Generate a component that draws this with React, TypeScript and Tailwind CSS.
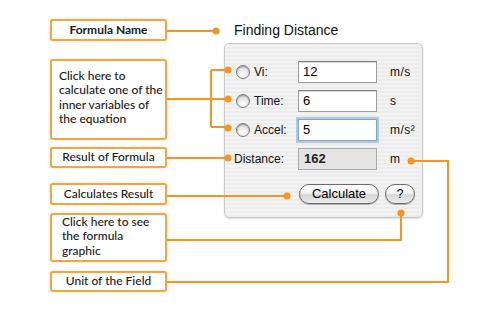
import React from 'react';

const orange = '#f7941e';

const Callout = ({ children, className }: { children: React.ReactNode; className: string }) => (
  <div
    className={`w-[117px] border-2 border-[#f8a43c] rounded-[3px] bg-white shadow-[0_0_3px_rgba(247,148,30,0.25)] text-[12px] leading-[14.4px] text-[#1a1a1a] font-['Lato',sans-serif] ${className}`}
  >
    {children}
  </div>
);

const Radio = () => (
  <div className="w-[14px] h-[14px] rounded-full border border-[#7a7a7a] bg-[radial-gradient(circle_at_50%_70%,#ffffff_0%,#e4e4e4_55%,#b9b9b9_100%)] shadow-[inset_0_1px_1px_rgba(0,0,0,0.25)]" />
);

const Field = ({ value, focus }: { value: string; focus?: boolean }) => (
  <div
    className={`w-[79px] h-[22px] bg-white flex items-center pl-[4px] text-[13px] text-black border ${
      focus
        ? 'border-[#7ea6cf] shadow-[0_0_0_2px_rgba(126,166,207,0.55)]'
        : 'border-[#9d9d9d] border-t-[#7b7b7b] shadow-[inset_0_1px_1px_rgba(0,0,0,0.15)]'
    }`}
  >
    {value}
  </div>
);

const Connectors = () => (
  <svg className="absolute inset-0 pointer-events-none" width="501" height="336" viewBox="0 0 501 336">
    <g stroke={orange} strokeWidth="2" fill="none">
      <path d="M167 31 H216" />
      <path d="M167 99 H228 M211 70 V127 M211 70 H228 M211 127 H228" />
      <path d="M167 158 H228" />
      <path d="M167 196 H287" />
      <path d="M401 213 V240 H167" />
      <path d="M411 161 H448 V282 H167" />
    </g>
    <g fill={orange}>
      <circle cx="216" cy="31" r="3.5" />
      <circle cx="228" cy="70" r="3.5" />
      <circle cx="228" cy="99" r="3.5" />
      <circle cx="228" cy="128" r="3.5" />
      <circle cx="228" cy="158" r="3.5" />
      <circle cx="287" cy="196" r="3.5" />
      <circle cx="401" cy="213" r="3.5" />
      <circle cx="411" cy="161" r="3.5" />
    </g>
  </svg>
);

const App = () => {
  const rows = [
    { label: 'Vi:', value: '12', unit: 'm/s' },
    { label: 'Time:', value: '6', unit: 's' },
    { label: 'Accel:', value: '5', unit: 'm/s²', focus: true },
  ];

  return (
    <div className="relative w-[501px] h-[336px] bg-white flex overflow-hidden">
      {/* Callouts */}
      <div className="ml-[50px] pt-[19px] flex flex-col">
        <Callout className="h-[22px] flex items-center justify-center font-bold">Formula Name</Callout>
        <Callout className="h-[81px] mt-[18px] pl-[7px] pt-[8px] font-medium">
          Click here to
          <br />
          calculate one of the
          <br />
          inner variables of
          <br />
          the equation
        </Callout>
        <Callout className="h-[21px] mt-[7px] flex items-center justify-center font-medium">Result of Formula</Callout>
        <Callout className="h-[22px] mt-[15px] flex items-center justify-center font-medium">Calculates Result</Callout>
        <Callout className="h-[49px] mt-[8px] pl-[10px] pt-0 font-medium">
          Click here to see
          <br />
          the formula
          <br />
          graphic
        </Callout>
        <Callout className="h-[21px] mt-[9px] flex items-center justify-center font-medium">Unit of the Field</Callout>
      </div>

      {/* Calculator */}
      <div className="ml-[57px] w-[199px] flex flex-col font-['Liberation_Sans',sans-serif]">
        <div className="mt-[20px] h-[20px] leading-[20px] pl-[10px] text-[14px] text-[#111]">Finding Distance</div>
        <div className="mt-[3px] h-[175px] rounded-[5px] border border-[#c9c9c9] bg-[repeating-linear-gradient(0deg,#ececec_0px,#ececec_2px,#f3f3f3_2px,#f3f3f3_4px)] shadow-[0_1px_2px_rgba(0,0,0,0.15)] pt-[17px] flex flex-col gap-[7px] text-[12px] text-[#111]">
          {rows.map((r) => (
            <div key={r.label} className="h-[22px] flex items-center pl-[11px]">
              <Radio />
              <div className="w-[44px] ml-[4px]">{r.label}</div>
              <Field value={r.value} focus={r.focus} />
              <div className="ml-[13px] tracking-[0.5px]">{r.unit}</div>
            </div>
          ))}
          <div className="h-[22px] flex items-center pl-[9px]">
            <div className="w-[64px]">Distance:</div>
            <div className="w-[79px] h-[22px] bg-[#e4e4e4] border border-[#a9a9a9] flex items-center pl-[5px] text-[13px] font-bold text-[#222]">
              162
            </div>
            <div className="ml-[13px]">m</div>
          </div>
          <div className="mt-[7px] flex pl-[74px] gap-[6px]">
            <div className="w-[80px] h-[20px] rounded-full border border-[#6b6b6b] bg-[linear-gradient(180deg,#ffffff_0%,#f2f2f2_45%,#d6d6d6_55%,#ececec_100%)] shadow-[0_1px_1px_rgba(0,0,0,0.25)] flex items-center justify-center text-[13px] text-black">
              Calculate
            </div>
            <div className="w-[30px] h-[20px] rounded-full border border-[#6b6b6b] bg-[linear-gradient(180deg,#ffffff_0%,#f2f2f2_45%,#d6d6d6_55%,#ececec_100%)] shadow-[0_1px_1px_rgba(0,0,0,0.25)] flex items-center justify-center text-[12px] text-black">
              ?
            </div>
          </div>
        </div>
      </div>

      <Connectors />
    </div>
  );
};

export default App;
